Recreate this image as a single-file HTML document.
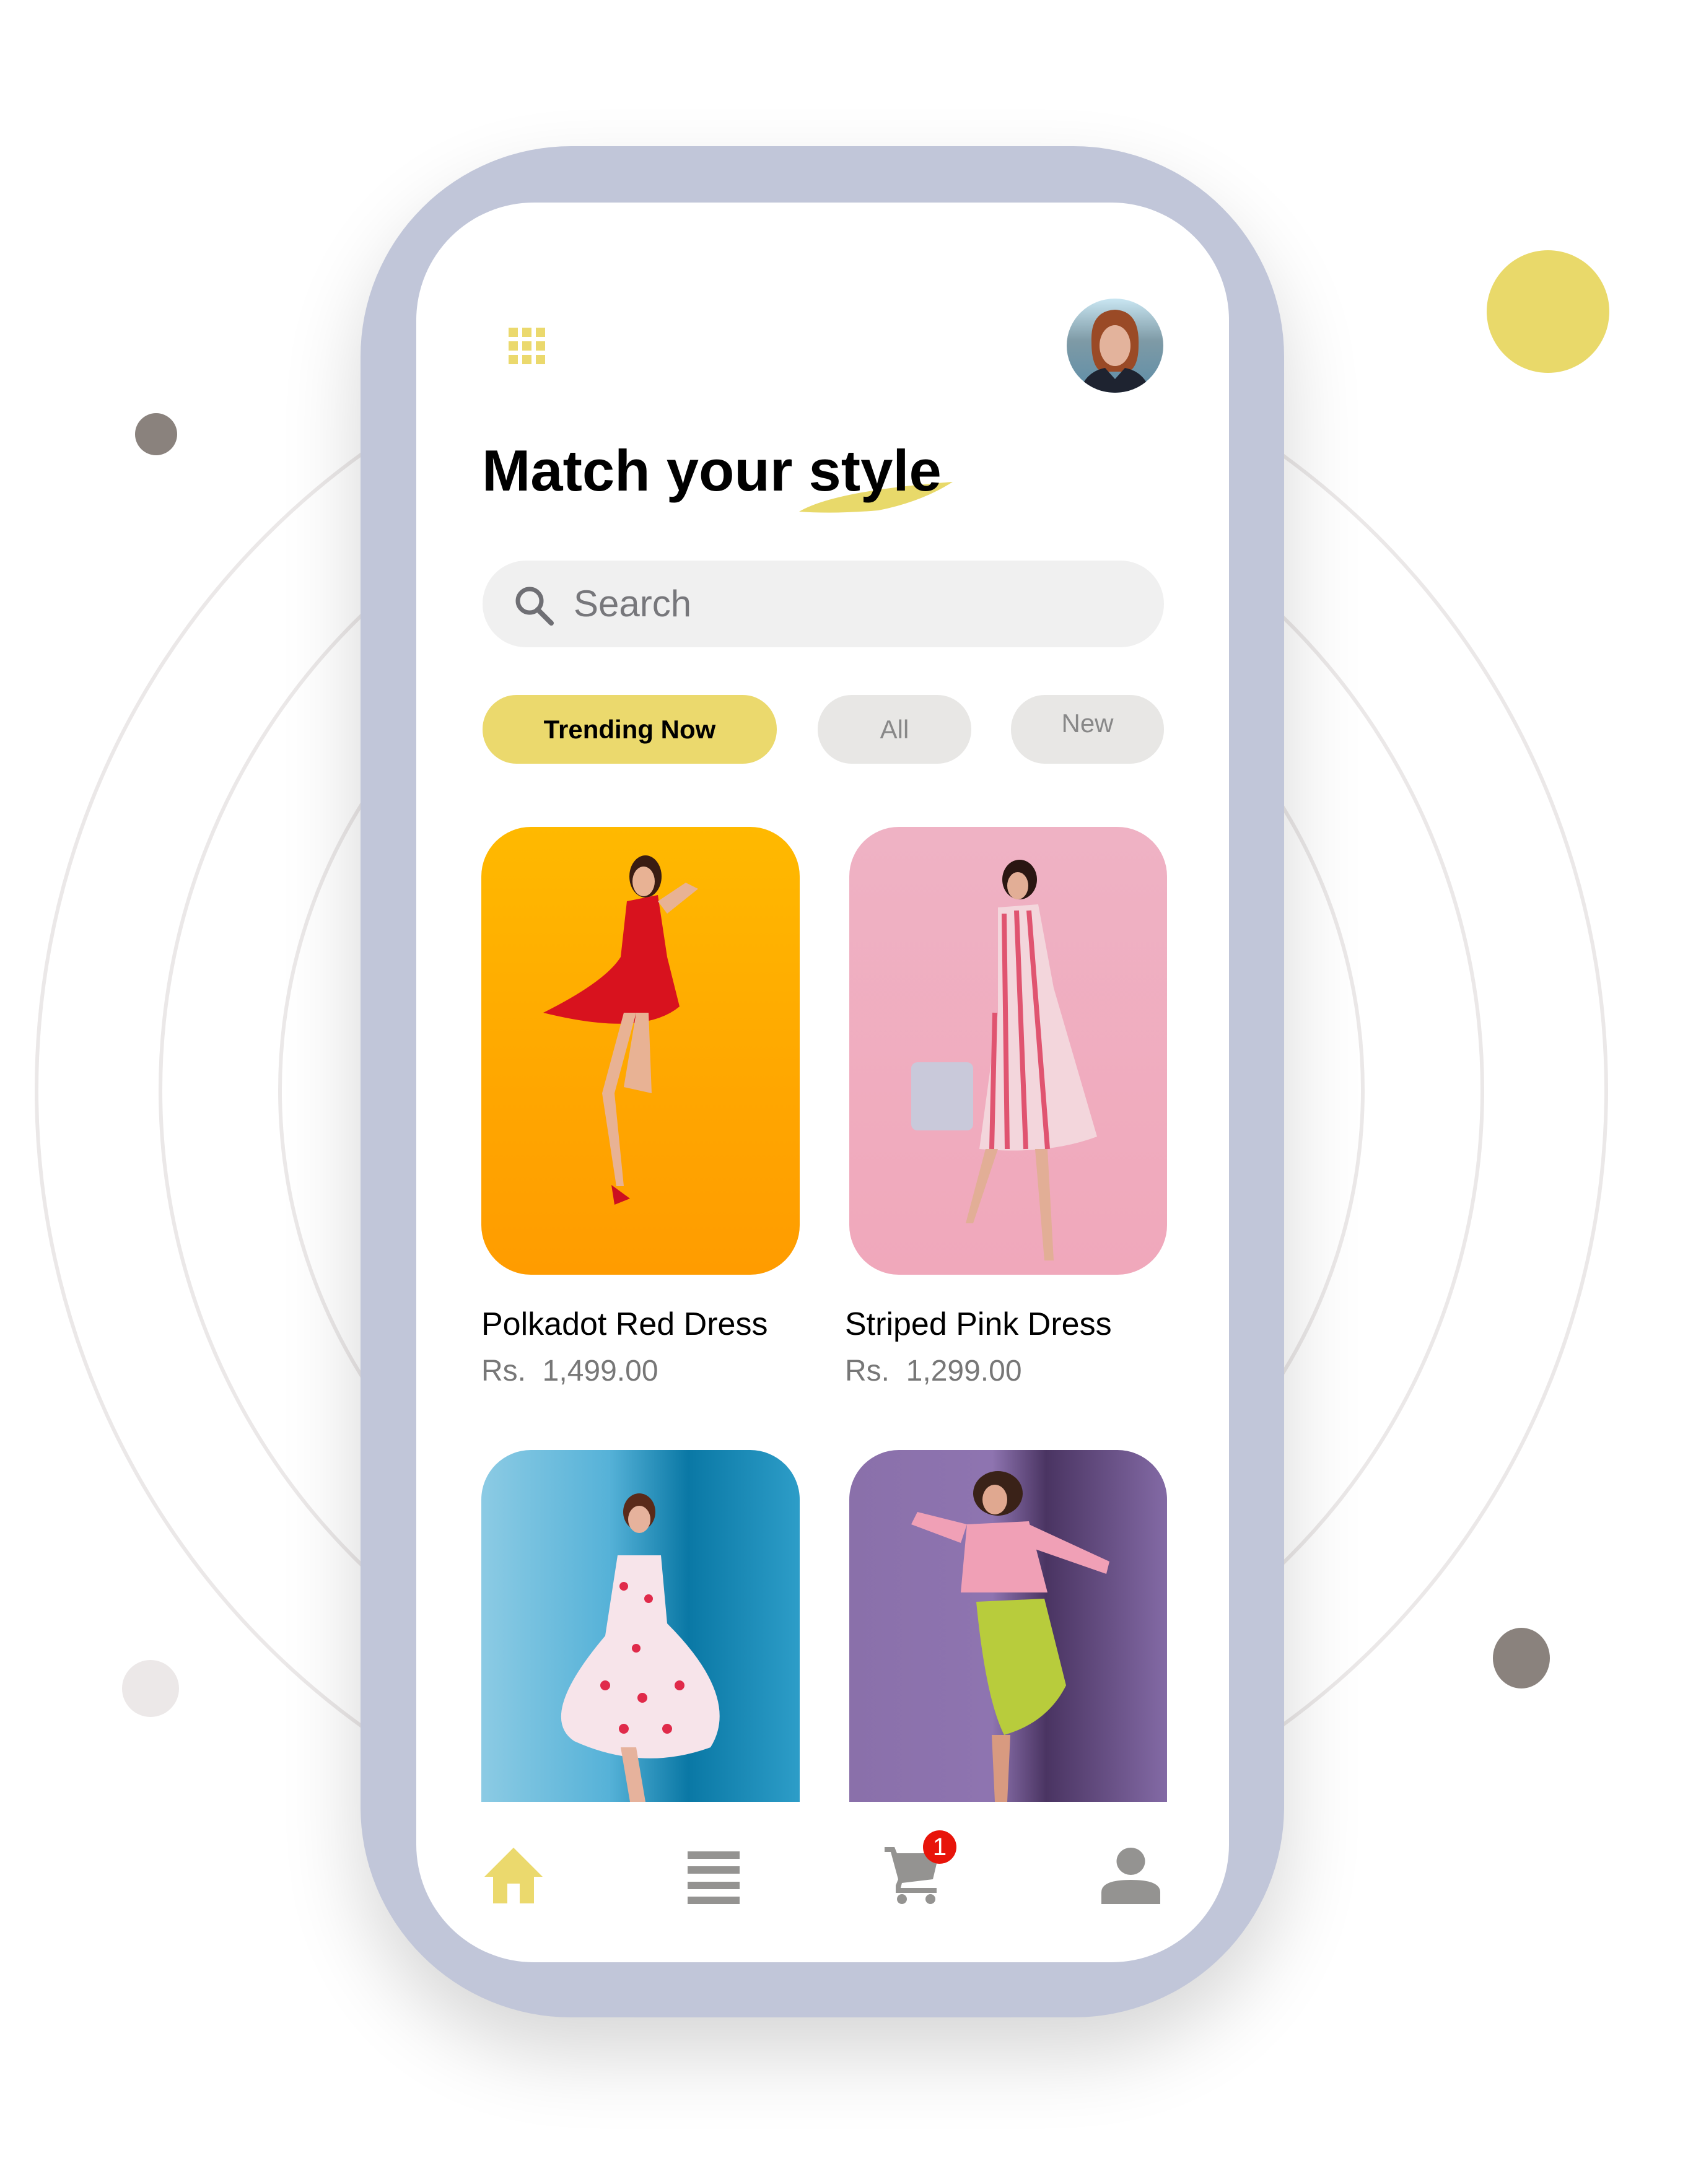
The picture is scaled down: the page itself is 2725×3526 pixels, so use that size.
<!DOCTYPE html>
<html><head><meta charset="utf-8"><style>
*{margin:0;padding:0;box-sizing:border-box}
body{width:2725px;height:3526px;background:#fff;position:relative;overflow:hidden;font-family:"Liberation Sans",sans-serif}
.abs{position:absolute}
.ring{position:absolute;border:6px solid #ebe8e8;border-radius:50%}
.dot{position:absolute;border-radius:50%}
.phone{position:absolute;left:582px;top:236px;width:1491px;height:3021px;background:#c1c6d9;border-radius:340px;box-shadow:0 60px 180px rgba(0,0,0,0.16)}
.screen{position:absolute;left:672px;top:327px;width:1312px;height:2841px;background:#fff;border-radius:190px;overflow:hidden}
.card{position:absolute;border-radius:80px;overflow:hidden}
.t{position:absolute;white-space:nowrap}
</style></head><body>
<div class="ring" style="left:56px;top:490px;width:2540px;height:2540px"></div>
<div class="ring" style="left:256px;top:690px;width:2140px;height:2140px"></div>
<div class="ring" style="left:449px;top:883px;width:1754px;height:1754px"></div>
<div class="dot" style="left:218px;top:667px;width:68px;height:68px;background:#8a827d"></div>
<div class="dot" style="left:2400px;top:404px;width:198px;height:198px;background:#e9d96a"></div>
<div class="dot" style="left:197px;top:2680px;width:92px;height:92px;background:#ece8e8"></div>
<div class="dot" style="left:2410px;top:2628px;width:92px;height:98px;background:#8a827d"></div>

<div class="phone"></div>
<div class="screen"></div>

<svg class="abs" style="left:821px;top:529px" width="60" height="60" viewBox="0 0 60 60" fill="#ebd96d">
<rect x="0" y="0" width="15" height="15"/><rect x="22" y="0" width="15" height="15"/><rect x="44" y="0" width="15" height="15"/>
<rect x="0" y="22" width="15" height="15"/><rect x="22" y="22" width="15" height="15"/><rect x="44" y="22" width="15" height="15"/>
<rect x="0" y="44" width="15" height="15"/><rect x="22" y="44" width="15" height="15"/><rect x="44" y="44" width="15" height="15"/>
</svg>
<svg class="abs" style="left:1722px;top:482px" width="156" height="152" viewBox="0 0 156 152">
<defs><clipPath id="av"><ellipse cx="78" cy="76" rx="78" ry="76"/></clipPath>
<linearGradient id="sky" x1="0" y1="0" x2="0" y2="1"><stop offset="0" stop-color="#c9e6f2"/><stop offset="0.45" stop-color="#7e9aa6"/><stop offset="1" stop-color="#5e8ea8"/></linearGradient></defs>
<g clip-path="url(#av)">
<rect width="156" height="152" fill="url(#sky)"/>
<path d="M40 70 Q38 20 78 18 Q118 20 116 75 Q116 110 100 118 L56 118 Q40 110 40 70Z" fill="#9a4a26"/>
<ellipse cx="78" cy="76" rx="25" ry="33" fill="#e3b39c"/>
<path d="M20 152 Q30 118 62 112 L78 130 L94 112 Q126 118 136 152Z" fill="#1e2330"/>
</g></svg>

<svg class="abs" style="left:1288px;top:770px" width="256" height="60" viewBox="0 0 256 60"><path d="M2 56 Q60 22 250 8 Q200 40 130 54 Q60 60 2 56Z" fill="#e8d96a"/></svg>
<div class="t" style="left:778px;top:706px;font-size:94px;font-weight:bold;color:#000">Match your style</div>

<div class="abs" style="left:779px;top:905px;width:1100px;height:140px;background:#f0f0f0;border-radius:70px"></div>
<svg class="abs" style="left:830px;top:945px" width="66" height="66" viewBox="0 0 66 66"><circle cx="25" cy="25" r="19" fill="none" stroke="#6f6f74" stroke-width="7"/><path d="M38 39 L60 61" stroke="#6f6f74" stroke-width="8" stroke-linecap="round"/></svg>
<div class="t" style="left:926px;top:940px;font-size:60px;color:#77777b">Search</div>

<div class="abs" style="left:779px;top:1122px;width:475px;height:111px;background:#ebd96d;border-radius:55px;text-align:center;line-height:111px;font-size:42px;font-weight:bold;color:#000">Trending Now</div>
<div class="abs" style="left:1320px;top:1122px;width:248px;height:111px;background:#e8e7e5;border-radius:55px;text-align:center;line-height:111px;font-size:42px;color:#888">All</div>
<div class="abs" style="left:1632px;top:1122px;width:247px;height:111px;background:#e8e7e5;border-radius:55px;text-align:center;line-height:92px;font-size:42px;color:#888">New</div>

<div class="card" style="left:777px;top:1335px;width:514px;height:723px;background:linear-gradient(180deg,#ffb900 0%,#ffa600 60%,#ff9c00 100%)">
<svg width="514" height="723" viewBox="0 0 514 723">
<ellipse cx="265" cy="80" rx="26" ry="34" fill="#3a1c12"/>
<ellipse cx="262" cy="88" rx="18" ry="24" fill="#e8b294"/>
<path d="M235 120 L285 110 L300 210 L320 290 Q260 340 100 300 Q200 250 225 210Z" fill="#d8121e"/>
<path d="M285 120 L330 90 L350 100 L300 140Z" fill="#e8b294"/>
<path d="M230 300 L250 300 L215 430 L230 580 L218 580 L195 430Z" fill="#e8b294"/>
<path d="M250 300 L270 300 L275 430 L230 420Z" fill="#e8b294"/>
<path d="M210 578 L240 600 L215 610Z" fill="#cc1020"/>
</svg></div>
<div class="card" style="left:1371px;top:1335px;width:513px;height:723px;background:linear-gradient(180deg,#efb2c4 0%,#f0a8bb 100%)">
<svg width="513" height="723" viewBox="0 0 513 723">
<ellipse cx="275" cy="85" rx="28" ry="32" fill="#2a1612"/>
<ellipse cx="272" cy="95" rx="17" ry="22" fill="#e2ae96"/>
<path d="M240 130 L305 125 L330 260 L400 500 Q320 530 210 520 L240 300Z" fill="#f3d6dc"/>
<path d="M250 140 L255 520 M270 135 L285 520 M290 135 L320 520 M235 300 L230 520" stroke="#e05470" stroke-width="8"/>
<rect x="100" y="380" width="100" height="110" rx="10" fill="#c9c9da"/>
<path d="M220 520 L240 520 L200 640 L188 640Z M300 520 L320 520 L330 700 L315 700Z" fill="#e2ae96"/>
</svg></div>
<div class="t" style="left:777px;top:2108px;font-size:52px;color:#000">Polkadot Red Dress</div>
<div class="t" style="left:777px;top:2186px;font-size:48px;color:#777">Rs.&nbsp; 1,499.00</div>
<div class="t" style="left:1364px;top:2108px;font-size:52px;color:#000">Striped Pink Dress</div>
<div class="t" style="left:1364px;top:2186px;font-size:48px;color:#777">Rs.&nbsp; 1,299.00</div>

<div class="card" style="left:777px;top:2341px;width:514px;height:568px;border-radius:80px 80px 0 0;background:linear-gradient(90deg,#8ccbe4 0%,#56b2d8 40%,#0a78a5 65%,#2d9dc8 100%)">
<svg width="514" height="568" viewBox="0 0 514 568">
<ellipse cx="255" cy="100" rx="26" ry="30" fill="#5a2a1a"/>
<ellipse cx="255" cy="112" rx="18" ry="22" fill="#e6b29c"/>
<path d="M220 170 L290 170 L300 280 Q420 400 370 480 Q260 520 150 470 Q90 430 200 300Z" fill="#f7e4ea"/>
<g fill="#e02a4a"><circle cx="230" cy="220" r="7"/><circle cx="270" cy="240" r="7"/><circle cx="200" cy="380" r="8"/><circle cx="260" cy="400" r="8"/><circle cx="320" cy="380" r="8"/><circle cx="230" cy="450" r="8"/><circle cx="300" cy="450" r="8"/><circle cx="250" cy="320" r="7"/></g>
<path d="M225 480 L250 480 L265 568 L240 568Z" fill="#e6b29c"/>
</svg></div>
<div class="card" style="left:1371px;top:2341px;width:513px;height:568px;border-radius:80px 80px 0 0;background:linear-gradient(90deg,#8a70aa 0%,#8e74b0 45%,#4a3462 62%,#836aa5 100%)">
<svg width="513" height="568" viewBox="0 0 513 568">
<ellipse cx="240" cy="70" rx="40" ry="36" fill="#3a2218"/>
<ellipse cx="235" cy="80" rx="20" ry="24" fill="#e0a890"/>
<path d="M190 120 L290 115 L320 230 L180 230Z M190 120 L110 100 L100 120 L180 150Z M290 120 L420 180 L415 200 L300 160Z" fill="#f0a0b6"/>
<path d="M205 245 L315 240 L350 380 Q320 440 250 460 Q220 400 205 245Z" fill="#b8cc3c"/>
<path d="M230 460 L260 460 L255 568 L235 568Z" fill="#d89a80"/>
</svg></div>

<svg class="abs" style="left:782px;top:2983px" width="94" height="90" viewBox="0 0 94 90"><path d="M47 0 L94 47 L80 47 L80 90 L57 90 L57 58 L37 58 L37 90 L14 90 L14 47 L0 47Z" fill="#ebd96d"/></svg>
<svg class="abs" style="left:1110px;top:2989px" width="84" height="85" viewBox="0 0 84 85" fill="#949391"><rect y="0" width="84" height="12"/><rect y="24" width="84" height="12"/><rect y="49" width="84" height="12"/><rect y="73" width="84" height="12"/></svg>
<svg class="abs" style="left:1428px;top:2982px" width="90" height="93" viewBox="0 0 90 93" fill="#949391">
<path d="M0 0 L16 0 L20 10 L88 10 L78 52 L28 58 L26 66 L84 66 L84 74 L18 74 L18 62 L22 52 L10 8 L0 8Z"/>
<circle cx="28" cy="84" r="8"/><circle cx="74" cy="84" r="8"/></svg>
<div class="abs" style="left:1490px;top:2955px;width:54px;height:54px;border-radius:50%;background:#e8140a;color:#fff;font-size:40px;text-align:center;line-height:54px">1</div>
<svg class="abs" style="left:1778px;top:2983px" width="95" height="91" viewBox="0 0 95 91" fill="#949391"><ellipse cx="47.5" cy="22" rx="23" ry="22"/><path d="M0 91 L0 72 Q0 52 47.5 52 Q95 52 95 72 L95 91Z"/></svg>
</body></html>
